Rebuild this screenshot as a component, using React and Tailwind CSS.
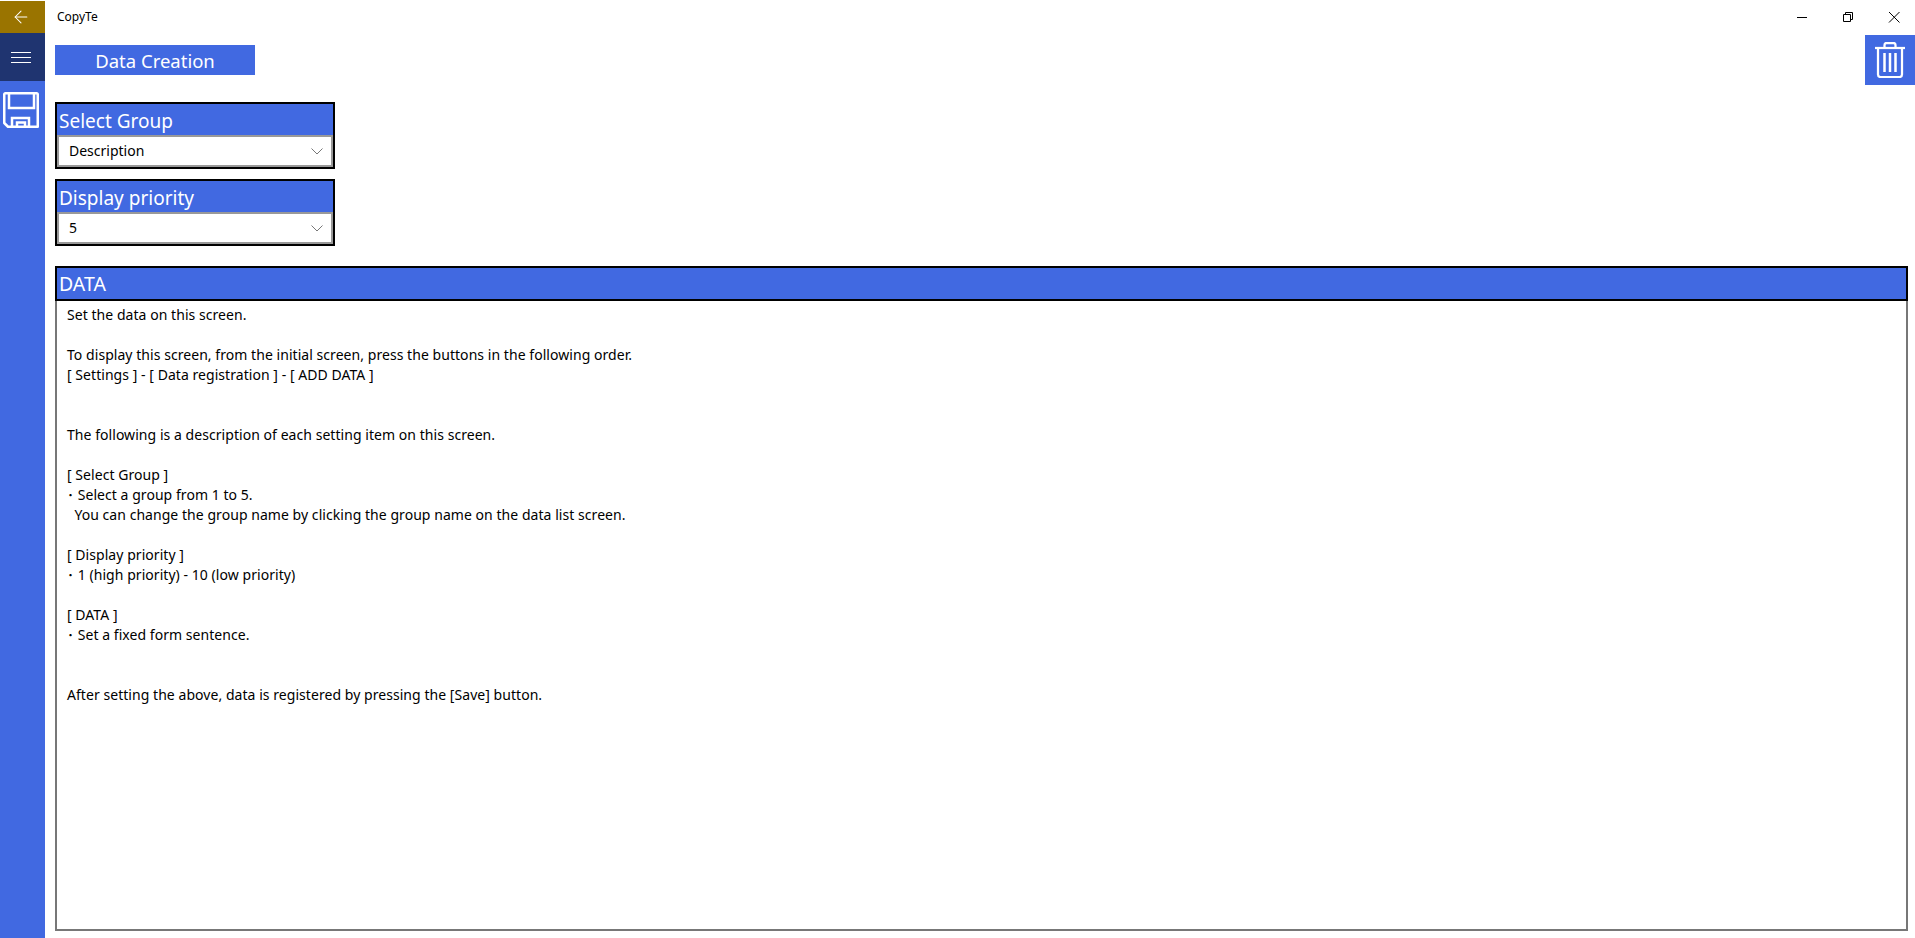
import React from 'react';
import { ArrowLeft } from 'lucide-react';

const helpText = `Set the data on this screen.

To display this screen, from the initial screen, press the buttons in the following order.
[ Settings ] - [ Data registration ] - [ ADD DATA ]


The following is a description of each setting item on this screen.

[ Select Group ]
･ Select a group from 1 to 5.
  You can change the group name by clicking the group name on the data list screen.

[ Display priority ]
･ 1 (high priority) - 10 (low priority)

[ DATA ]
･ Set a fixed form sentence.


After setting the above, data is registered by pressing the [Save] button.`;

function SaveIcon() {
  return (
    <svg width="36" height="36" viewBox="0 0 36 36" fill="none" stroke="white" strokeWidth="2.5">
      <path d="M1.25 2.5Q1.25 1.25 2.5 1.25H33.5Q34.75 1.25 34.75 2.5V34.75H5L1.25 31Z" strokeLinejoin="round" />
      <path d="M6 1.5V16H31V1.5" />
      <path d="M9 34.5V26H26V34.5" />
      <path d="M14 34.5V30.5H22V34.5" />
    </svg>
  );
}

function TrashIcon() {
  return (
    <svg width="30" height="36" viewBox="0 0 30 36" fill="none" stroke="white" strokeWidth="2.25">
      <path d="M0 6H30" />
      <path d="M3 6V32.5Q3 35 5.5 35H24.5Q27 35 27 32.5V6" />
      <path d="M9.5 5.5V3Q9.5 1 11.5 1H18.5Q20.5 1 20.5 3V5.5" />
      <path d="M9.5 11V30M15 11V30M20.5 11V30" strokeWidth="2.5" />
    </svg>
  );
}

function WindowButtons() {
  return (
    <div className="flex items-start text-black">
      <svg width="46" height="33" viewBox="0 0 46 33" stroke="black" fill="none">
        <path d="M17 17.5H27" />
      </svg>
      <svg width="46" height="33" viewBox="0 0 46 33" stroke="black" fill="none">
        <path d="M17.5 14.5H24.5V21.5H17.5Z" />
        <path d="M19.5 14V12.5H26.5V19.5H25" />
      </svg>
      <svg width="46" height="33" viewBox="0 0 46 33" stroke="black" fill="none" className="mr-[-3px]">
        <path d="M17 12L27.5 22.5M27.5 12L17 22.5" />
      </svg>
    </div>
  );
}

function GroupSelect({ label, value }) {
  return (
    <div className="w-[280px] border-2 border-black bg-[#4169e1]">
      <div className="h-[31px] pl-[2px] pt-px text-[19px] leading-[33px] text-white">{label}</div>
      <div className="flex h-[32px] items-center justify-between border-2 border-[#999999] bg-white pl-[10px] pr-[8px] text-[14px] text-black">
        <span className="-mt-[2px]">{value}</span>
        <svg width="12" height="7" viewBox="0 0 12 7" fill="none" stroke="#777777">
          <path d="M0.5 0.5L6 6L11.5 0.5" />
        </svg>
      </div>
    </div>
  );
}

export default function App() {
  return (
    <div className="flex h-[938px] w-[1915px] overflow-hidden bg-white font-['Noto_Sans','Noto_Sans_CJK_JP',sans-serif]">
      <div className="flex w-[45px] shrink-0 flex-col pt-px">
        <div className="flex h-[32px] items-center justify-center bg-[#9a7400] pr-[3px]">
          <ArrowLeft size={20} color="white" strokeWidth={1.25} />
        </div>
        <div className="flex h-[48px] flex-col items-center justify-center gap-[4px] bg-[#1f3470] pr-[3px]">
          <div className="h-px w-5 bg-white" />
          <div className="h-px w-5 bg-white" />
          <div className="h-px w-5 bg-white" />
        </div>
        <div className="flex flex-1 justify-start bg-[#4169e1] pl-[3px] pt-[11px]">
          <SaveIcon />
        </div>
      </div>

      <div className="flex min-w-0 flex-1 flex-col">
        <div className="flex h-[33px] shrink-0 items-center justify-between pl-[12px]">
          <span className="text-[12px] text-black">CopyTe</span>
          <WindowButtons />
        </div>

        <div className="flex h-[52px] shrink-0 items-start justify-between pl-[10px]">
          <div className="mt-[12px] flex h-[30px] w-[200px] items-center justify-center bg-[#4169e1] pt-[2px] text-[18.5px] text-white">
            Data Creation
          </div>
          <div className="mt-[2px] flex h-[50px] w-[50px] items-center justify-center bg-[#4169e1]">
            <TrashIcon />
          </div>
        </div>

        <div className="mt-[17px] flex flex-col gap-[10px] pl-[10px]">
          <GroupSelect label="Select Group" value="Description" />
          <GroupSelect label="Display priority" value="5" />
        </div>

        <div className="mt-[20px] mb-[7px] ml-[10px] mr-[7px] flex min-h-0 flex-1 flex-col">
          <div className="h-[35px] shrink-0 border-2 border-black bg-[#4169e1] pl-[2px] text-[19.5px] leading-[32px] text-white">
            DATA
          </div>
          <div className="flex-1 whitespace-pre border-2 border-t-0 border-[#777777] px-[10px] pt-[4px] text-[14px] leading-[20px] tracking-[0.05px] text-black">
            {helpText}
          </div>
        </div>
      </div>
    </div>
  );
}
